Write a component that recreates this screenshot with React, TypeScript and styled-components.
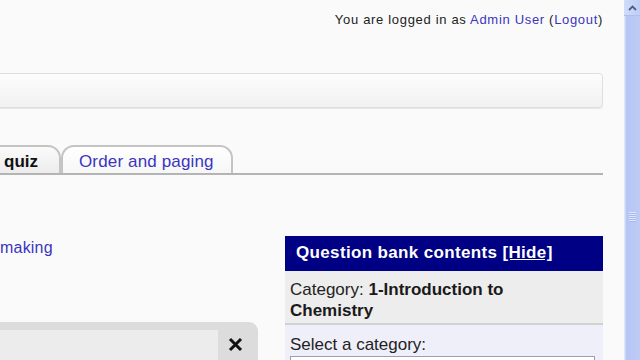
import React from "react";
import styled, { createGlobalStyle } from "styled-components";

const Global = createGlobalStyle`
  html, body { margin: 0; padding: 0; background: #fafafa; overflow: hidden; }
  body { width: 640px; height: 360px; font-family: "Liberation Sans", Arial, sans-serif; }
`;

const Page = styled.div`
  display: flex;
  width: 640px;
  height: 360px;
  overflow: hidden;
`;

const Main = styled.div`
  width: 624px;
  height: 360px;
  overflow: hidden;
  display: flex;
  flex-direction: column;
  & > * { flex-shrink: 0; }
`;

const Header = styled.div`
  height: 73px;
  display: flex;
  justify-content: flex-end;
  padding: 12px 21px 0 0;
  box-sizing: border-box;
  font-size: 13px;
  color: #222;
  letter-spacing: 0.68px;
`;

const Link = styled.a`
  color: #3a35c0;
  text-decoration: none;
`;

const NavBar = styled.div`
  margin: 0 21px 0 -10px;
  height: 35px;
  box-sizing: border-box;
  border: 1px solid #dedede;
  border-radius: 0 4px 4px 0;
  background: linear-gradient(#fdfdfd, #f1f1f1);
  box-shadow: 0 1px 0 #e6e6e6;
`;

const TabRow = styled.div`
  margin: 37px 21px 0 0;
  height: 28px;
  display: flex;
  align-items: flex-end;
  border-bottom: 2px solid #b4b4b4;
`;

const Tab = styled.div<{ $active?: boolean; $offset?: number }>`
  height: 28px;
  box-sizing: border-box;
  margin-left: ${(p) => p.$offset ?? 0}px;
  padding: 5px ${(p) => (p.$active ? 21 : 17)}px 0 ${(p) => (p.$active ? 19 : 16)}px;
  border: 2px solid #c4c4c4;
  border-bottom: none;
  border-radius: 13px 13px 0 0;
  background: ${(p) => (p.$active ? "linear-gradient(#fbfbfb, #ececec)" : "linear-gradient(#ffffff, #f6f6f6)")};
  font-size: 17px;
  font-weight: ${(p) => (p.$active ? "bold" : "normal")};
  color: ${(p) => (p.$active ? "#111" : "#3a35c0")};
  letter-spacing: ${(p) => (p.$active ? 0 : 0.15)}px;
  white-space: nowrap;
`;

const Body = styled.div`
  flex: 1;
  display: grid;
  grid-template-columns: 285px 318px;
`;

const LeftCol = styled.div`
  display: flex;
  flex-direction: column;
  padding-top: 64px;
`;

const LinkLine = styled.div`
  font-size: 16px;
  height: 20px;
  letter-spacing: 0.2px;
`;

const Panel = styled.div`
  margin-top: 63px;
  margin-left: -10px;
  width: 268px;
  height: 60px;
  background: #dcdcdc;
  border-radius: 0 9px 0 0;
  display: flex;
  padding-top: 8px;
  box-sizing: border-box;
`;

const PanelField = styled.div`
  width: 228px;
  height: 40px;
  background: #ececec;
`;

const Close = styled.div`
  width: 34px;
  display: flex;
  justify-content: center;
  padding-top: 7px;
`;

const Bank = styled.div`
  margin-top: 61px;
  display: flex;
  flex-direction: column;
`;

const BankHead = styled.div`
  height: 35px;
  background: #000085;
  color: #fff;
  font-size: 17px;
  font-weight: bold;
  padding: 7px 0 0 11px;
  box-sizing: border-box;
  letter-spacing: 0.35px;
`;

const HideLink = styled.span`
  text-decoration: underline;
`;

const Category = styled.div`
  background: #ededed;
  border-bottom: 2px solid #d2d2d2;
  padding: 8px 70px 3px 5px;
  font-size: 17px;
  line-height: 21px;
  color: #222;
  height: 54px;
  box-sizing: border-box;
`;

const Strong = styled.b`
  color: #1a1a1a;
`;

const SelectArea = styled.div`
  background: #efeffa;
  padding: 10px 5px 0 5px;
  font-size: 17px;
  line-height: 20px;
  color: #222;
  height: 40px;
  box-sizing: border-box;
`;

const SelectBox = styled.div`
  margin-top: 1px;
  height: 14px;
  border: 1px solid #9aa0b0;
  background: #fff;
  margin-right: 3px;
`;

const Scrollbar = styled.div`
  width: 16px;
  height: 360px;
  background: linear-gradient(90deg, #dfe6fb 0, #dfe6fb 1px, #b6c5f4 2px, #bdcbf5 100%);
  display: flex;
  flex-direction: column;
  align-items: stretch;
`;

const ScrollBtn = styled.div`
  height: 15px;
  background: linear-gradient(90deg, #d0dcf9, #bfcdf5);
  border-bottom: 1px solid #aebeee;
  display: flex;
  align-items: center;
  justify-content: center;
`;

const Grip = styled.div`
  margin: 196px auto 0;
  width: 7px;
  height: 10px;
  background: repeating-linear-gradient(#dfe6fb 0 1px, #a9b9ec 1px 2px);
`;

export default function App() {
  return (
    <>
      <Global />
      <Page>
        <Main>
          <Header>
            <span>
              You are logged in as <Link>Admin User</Link> (<Link>Logout</Link>)
            </span>
          </Header>
          <NavBar />
          <TabRow>
            <Tab $active $offset={-17}>quiz</Tab>
            <Tab>Order and paging</Tab>
          </TabRow>
          <Body>
            <LeftCol>
              <LinkLine>
                <Link>making</Link>
              </LinkLine>
              <Panel>
                <PanelField />
                <Close>
                  <svg width="15" height="15" viewBox="0 0 15 15">
                    <path d="M2 2 L13 13 M13 2 L2 13" stroke="#111" strokeWidth="3" />
                  </svg>
                </Close>
              </Panel>
            </LeftCol>
            <Bank>
              <BankHead>
                Question bank contents <HideLink>[Hide]</HideLink>
              </BankHead>
              <Category>
                Category: <Strong>1-Introduction to Chemistry</Strong>
              </Category>
              <SelectArea>
                Select a category:
                <SelectBox />
              </SelectArea>
            </Bank>
          </Body>
        </Main>
        <Scrollbar>
          <ScrollBtn>
            <svg width="9" height="6" viewBox="0 0 9 6">
              <path d="M1 5 L4.5 1.5 L8 5" stroke="#4d6185" strokeWidth="1.8" fill="none" />
            </svg>
          </ScrollBtn>
          <Grip />
        </Scrollbar>
      </Page>
    </>
  );
}
